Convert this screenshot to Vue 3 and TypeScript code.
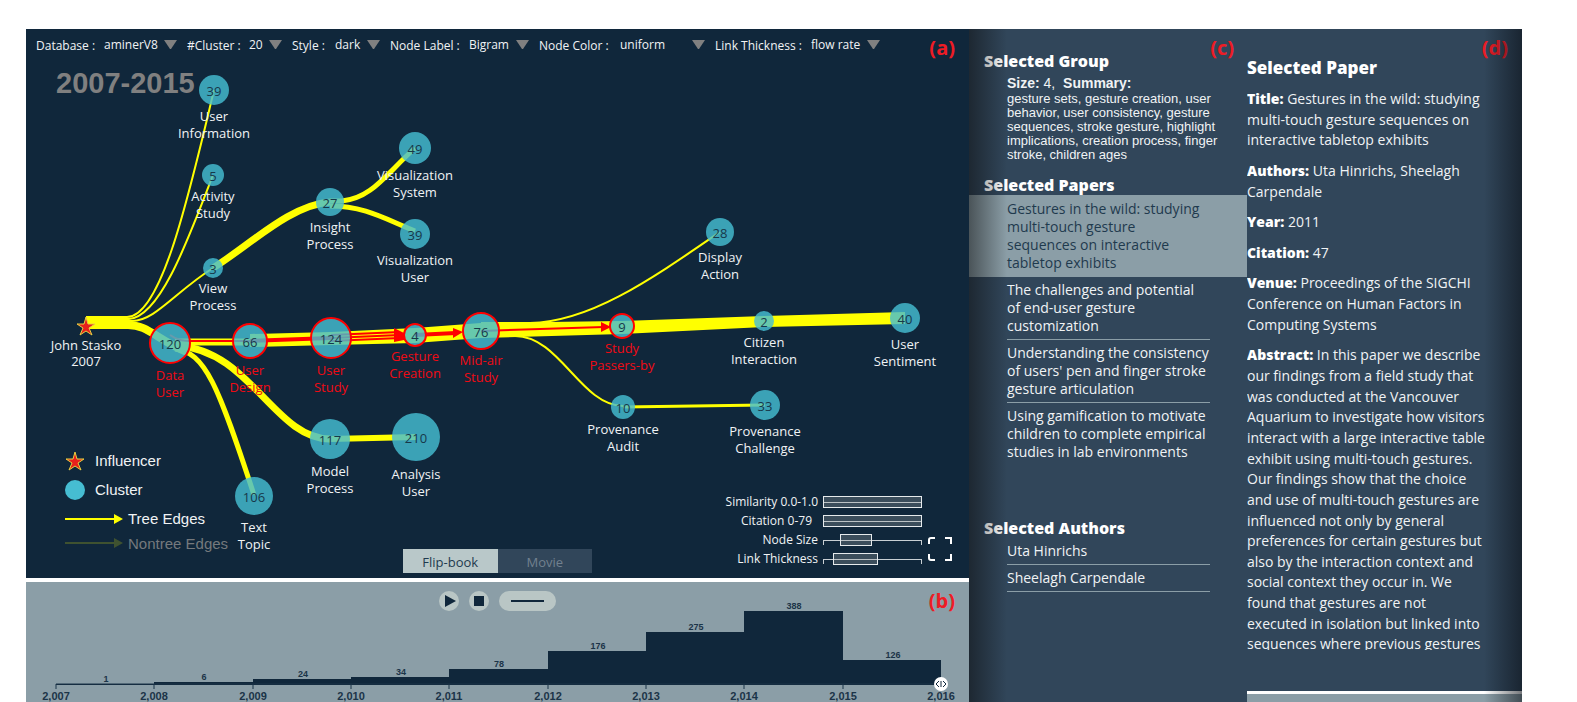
<script setup lang="ts">
import { ref } from 'vue'

interface Filter { id: string; label: string; value: string; span: number; field: number }
interface GraphNode { x: number; y: number; r: number; n: number; label: [string, string]; ty: number; hot?: boolean }
interface Edge { d: string; w: number }
interface Slider { id: string; label: string; thumb: number; value: number; inset?: boolean }

const filters: Filter[] = [
  { id: 'database', label: 'Database :', value: 'aminerV8', span: 151, field: 73 },
  { id: 'cluster', label: '#Cluster :', value: '20', span: 105, field: 33 },
  { id: 'style', label: 'Style :', value: 'dark', span: 98, field: 45 },
  { id: 'node-label', label: 'Node Label :', value: 'Bigram', span: 149, field: 60 },
  { id: 'node-color', label: 'Node Color :', value: 'uniform', span: 176, field: 85 },
  { id: 'link-thickness', label: 'Link Thickness :', value: 'flow rate', span: 175, field: 69 },
]

const nodes: GraphNode[] = [
  { x: 214, y: 90, r: 15, n: 39, label: ['User', 'Information'], ty: 121 },
  { x: 213, y: 175, r: 11, n: 5, label: ['Activity', 'Study'], ty: 201 },
  { x: 330, y: 202, r: 14, n: 27, label: ['Insight', 'Process'], ty: 232 },
  { x: 415, y: 148, r: 16, n: 49, label: ['Visualization', 'System'], ty: 180 },
  { x: 415, y: 234, r: 15, n: 39, label: ['Visualization', 'User'], ty: 265 },
  { x: 213, y: 268, r: 10, n: 3, label: ['View', 'Process'], ty: 293 },
  { x: 720, y: 232, r: 14, n: 28, label: ['Display', 'Action'], ty: 262 },
  { x: 170, y: 343, r: 20, n: 120, label: ['Data', 'User'], ty: 380, hot: true },
  { x: 250, y: 341, r: 17, n: 66, label: ['User', 'Design'], ty: 375, hot: true },
  { x: 331, y: 338, r: 20, n: 124, label: ['User', 'Study'], ty: 375, hot: true },
  { x: 330, y: 439, r: 20, n: 117, label: ['Model', 'Process'], ty: 476 },
  { x: 254, y: 496, r: 19, n: 106, label: ['Text', 'Topic'], ty: 532 },
  { x: 416, y: 437, r: 24, n: 210, label: ['Analysis', 'User'], ty: 479 },
  { x: 415, y: 335, r: 11, n: 4, label: ['Gesture', 'Creation'], ty: 361, hot: true },
  { x: 481, y: 331, r: 18, n: 76, label: ['Mid-air', 'Study'], ty: 365, hot: true },
  { x: 622, y: 326, r: 12, n: 9, label: ['Study', 'Passers-by'], ty: 353, hot: true },
  { x: 623, y: 407, r: 12, n: 10, label: ['Provenance', 'Audit'], ty: 434 },
  { x: 764, y: 321, r: 10, n: 2, label: ['Citizen', 'Interaction'], ty: 347 },
  { x: 905, y: 318, r: 15, n: 40, label: ['User', 'Sentiment'], ty: 349 },
  { x: 765, y: 405, r: 15, n: 33, label: ['Provenance', 'Challenge'], ty: 436 },
]

const edges: Edge[] = [
  { d: 'M86 317 H127 C162 317 190 190 214 90', w: 2 },
  { d: 'M86 319 H129 C160 317 188 240 213 175', w: 2 },
  { d: 'M86 321 H132 C155 321 175 292 213 268', w: 2 },
  { d: 'M86 325 H128 C148 325 156 339 187 352', w: 8 },
  { d: 'M213 268 C250 245 290 205 330 202', w: 7 },
  { d: 'M330 201 H342 C372 198 385 175 415 148', w: 5 },
  { d: 'M330 206 C365 206 385 219 415 231', w: 5 },
  { d: 'M178 346 C250 350 275 439 330 439', w: 7 },
  { d: 'M175 349 C205 352 218 385 254 495', w: 5 },
  { d: 'M330 439 L416 437', w: 6 },
  { d: 'M481 323 H530 C590 322 650 280 720 232', w: 2 },
  { d: 'M481 336 H515 C560 336 580 405 623 406', w: 2 },
  { d: 'M623 407 L765 405', w: 3 },
  { d: 'M175 342 L250 342', w: 7 },
]

const flowBand =
  'M250 334 L331 332 L415 328 L481 323 L622 321 L764 316 L905 312 V324 L764 327 L622 334 L481 338 L415 343 L331 345 L250 347 Z'

const sliders: Slider[] = [
  { id: 'similarity', label: 'Similarity 0.0-1.0', thumb: 99, value: 0 },
  { id: 'citation', label: 'Citation 0-79', thumb: 99, value: 0, inset: true },
  { id: 'node-size', label: 'Node Size', thumb: 32, value: 25 },
  { id: 'link-width', label: 'Link Thickness', thumb: 45, value: 19 },
]

const bars = [
  { n: 1, top: 102 }, { n: 6, top: 100 }, { n: 24, top: 97 }, { n: 34, top: 95 }, { n: 78, top: 87 },
  { n: 176, top: 69 }, { n: 275, top: 50 }, { n: 388, top: 29 }, { n: 126, top: 78 },
]
const years = ['2,007', '2,008', '2,009', '2,010', '2,011', '2,012', '2,013', '2,014', '2,015', '2,016']
const yearX = (i: number): number => Math.round(30 + (i * 885) / 9)

const papers = [
  'Gestures in the wild: studying multi-touch gesture sequences on interactive tabletop exhibits',
  'The challenges and potential of end-user gesture customization',
  "Understanding the consistency of users' pen and finger stroke gesture articulation",
  'Using gamification to motivate children to complete empirical studies in lab environments',
]
const authors = ['Uta Hinrichs', 'Sheelagh Carpendale']
const details = [
  { key: 'Title:', text: papers[0] },
  { key: 'Authors:', text: 'Uta Hinrichs, Sheelagh Carpendale' },
  { key: 'Year:', text: '2011' },
  { key: 'Citation:', text: '47' },
  { key: 'Venue:', text: 'Proceedings of the SIGCHI Conference on Human Factors in Computing Systems' },
  {
    key: 'Abstract:',
    text: 'In this paper we describe our findings from a field study that was conducted at the Vancouver Aquarium to investigate how visitors interact with a large interactive table exhibit using multi-touch gestures. Our findings show that the choice and use of multi-touch gestures are influenced not only by general preferences for certain gestures but also by the interaction context and social context they occur in. We found that gestures are not executed in isolation but linked into sequences where previous gestures',
  },
]

const selected = ref(0)
const mode = ref('Flip-book')
</script>

<template>
  <main class="page">
    <div class="left">
      <section class="graph">
        <svg class="canvas" viewBox="26 29 943 549">
          <text class="period" x="56" y="93">2007-2015</text>
          <g class="edges">
            <path v-for="(e, i) in edges" :key="i" :d="e.d" :stroke-width="e.w" />
          </g>
          <path class="band" :d="flowBand" />
          <g class="hot-edges">
            <path d="M170 335 C178 341 185 341 192 341 L250 341" stroke-width="2" />
            <path d="M250 341 L331 338" stroke-width="4" />
            <path d="M331 335 L400 332 M331 338 L400 335 M331 341 L400 338" stroke-width="2" />
            <path d="M415 335 L456 333" stroke-width="4" />
            <path d="M481 331 L604 327" stroke-width="2" />
            <path class="head" d="M394 328 L404 333 V340 L394 342 Z M453 328 L463 332 L453 338 Z M601 322 L611 327 L601 332 Z" />
          </g>
          <g v-for="(n, i) in nodes" :key="i" :class="['node', { hot: n.hot }]">
            <circle :cx="n.x" :cy="n.y" :r="n.r" />
            <text class="count" :x="n.x" :y="n.y + 6">{{ n.n }}</text>
            <text :x="n.x" :y="n.ty">{{ n.label[0] }}</text>
            <text :x="n.x" :y="n.ty + 17">{{ n.label[1] }}</text>
          </g>
          <g class="node">
            <path class="star" d="M86 317 L88 324 H95 L89 328 L92 335 L86 331 L80 335 L83 328 L77 324 H84 Z" />
            <text x="86" y="350">John Stasko</text>
            <text x="86" y="366">2007</text>
          </g>
        </svg>

        <form class="toolbar" @submit.prevent>
          <div v-for="f in filters" :key="f.id" class="filter" :style="{ width: f.span + 'px' }">
            <label :for="f.id">{{ f.label }}</label>
            <span class="field" :style="{ width: f.field + 'px' }">
              <select :id="f.id"><option>{{ f.value }}</option></select>
              <svg class="caret" width="13" height="9" viewBox="0 0 13 9"><path d="M0 0 H13 L7 9 H6 Z" /></svg>
            </span>
          </div>
        </form>

        <div class="footer">
          <ul class="legend">
            <li>
              <svg width="20" height="20" viewBox="0 0 20 20"><path class="star" d="M10 1 L12 8 H19 L13 12 L16 19 L10 15 L4 19 L7 12 L1 8 H8 Z" /></svg>
              Influencer
            </li>
            <li>
              <svg width="20" height="20" viewBox="0 0 20 20"><circle cx="10" cy="10" r="10" fill="#46bdd2" /></svg>
              Cluster
            </li>
            <li class="edge">
              <svg width="58" height="10" viewBox="0 0 58 10"><path d="M0 4 H49 V0 L58 5 L49 10 V6 H0 Z" fill="#ffff00" /></svg>
              Tree Edges
            </li>
            <li class="edge dim">
              <svg width="58" height="10" viewBox="0 0 58 10"><path d="M0 4 H49 V0 L58 5 L49 10 V6 H0 Z" fill="#3f5230" /></svg>
              Nontree Edges
            </li>
          </ul>
          <div class="tabs">
            <button v-for="m in ['Flip-book', 'Movie']" :key="m" type="button" :class="{ on: mode === m }" @click="mode = m">{{ m }}</button>
          </div>
          <div class="controls">
            <div class="sliders">
              <div v-for="s in sliders" :key="s.id" class="slider">
                <label :for="s.id" :class="{ inset: s.inset }">{{ s.label }}</label>
                <input :id="s.id" type="range" :value="s.value" :style="{ '--thumb': s.thumb + 'px' }" />
              </div>
            </div>
            <button class="fit" type="button" aria-label="Fit to screen">
              <svg width="24" height="24" viewBox="0 0 24 24"><path d="M1 7 V3 Q1 1 3 1 H7 M17 1 H23 V7 M23 17 V23 H17 M7 23 H3 Q1 23 1 21 V17" /></svg>
            </button>
          </div>
        </div>
        <span class="tag">(a)</span>
      </section>

      <section class="timeline">
        <svg class="chart" viewBox="0 0 943 120">
          <g v-for="(b, i) in bars" :key="i">
            <rect class="bar" :x="yearX(i)" :y="b.top" :width="yearX(i + 1) - yearX(i)" :height="103 - b.top" />
            <text class="value" :x="yearX(i) + 50" :y="b.top - 2">{{ b.n }}</text>
          </g>
          <path class="axis" d="M30 102 H915" />
          <g v-for="(y, i) in years" :key="y">
            <path class="axis" :d="`M${yearX(i)} 102 V107`" />
            <text class="year" :x="yearX(i)" y="118">{{ y }}</text>
          </g>
          <circle cx="915" cy="102" r="7" fill="#ffffff" />
          <path class="grip" d="M913 99 L910 102 L913 105 M915 99 V105 M917 99 L920 102 L917 105" />
        </svg>
        <div class="player">
          <button type="button" aria-label="Play"><svg width="20" height="20" viewBox="0 0 20 20"><path d="M6 4 L17 10 L6 16 Z" /></svg></button>
          <button type="button" aria-label="Stop"><svg width="20" height="20" viewBox="0 0 20 20"><path d="M5 5 H15 V15 H5 Z" /></svg></button>
          <button type="button" class="speed" aria-label="Speed"><svg width="57" height="20" viewBox="0 0 57 20"><path d="M12 9 H45 V11 H12 Z" /></svg></button>
        </div>
        <span class="tag">(b)</span>
      </section>
    </div>

    <section class="group">
      <h2>Selected Group</h2>
      <div class="summary">
        <p class="size"><b>Size:</b> 4,&nbsp; <b>Summary:</b></p>
        <p>gesture sets, gesture creation, user behavior, user consistency, gesture sequences, stroke gesture, highlight implications, creation process, finger stroke, children ages</p>
      </div>
      <h2>Selected Papers</h2>
      <ul class="papers">
        <li v-for="(p, i) in papers" :key="i" :class="{ on: selected === i }">
          <button type="button" @click="selected = i">{{ p }}</button>
        </li>
      </ul>
      <h2>Selected Authors</h2>
      <ul class="authors">
        <li v-for="a in authors" :key="a">{{ a }}</li>
      </ul>
      <span class="tag">(c)</span>
    </section>

    <section class="paper">
      <div class="scroller">
        <h2>Selected Paper</h2>
        <p v-for="d in details" :key="d.key"><b>{{ d.key }}</b> {{ d.text }}</p>
      </div>
      <div class="next"></div>
      <span class="tag">(d)</span>
    </section>
  </main>
</template>

<style>
body {
  margin: 0;
  background: #ffffff;
}
</style>

<style scoped>
.page {
  display: grid;
  grid-template-columns: 943fr 278fr 275fr;
  height: 100vh;
  box-sizing: border-box;
  padding: 29px 55px 0 26px;
  overflow: hidden;
  font: 13px 'Open Sans', 'Noto Sans', sans-serif;
  color: #f0f3f5;
}
button {
  font: inherit;
  color: inherit;
  border: 0;
  padding: 0;
  background: none;
}
ul {
  list-style: none;
  margin: 0;
  padding: 0;
}
.tag {
  position: absolute;
  top: 6px;
  right: 14px;
  font-size: 20px;
  line-height: 26px;
  font-weight: 700;
  color: #ee1c25;
}
.left {
  display: flex;
  flex-direction: column;
  gap: 4px;
  min-width: 0;
}
.graph {
  position: relative;
  display: grid;
  grid-template-rows: auto 1fr;
  background: #10273b;
}
.canvas {
  grid-area: 1 / 1 / 3 / 2;
  width: 100%;
  display: block;
}
.period {
  font: 700 29px 'Liberation Sans', Arial, sans-serif;
  fill: #808080;
}
.edges path,
.hot-edges path {
  fill: none;
  stroke: #ffff00;
}
.band {
  fill: #ffff00;
}
.hot-edges path {
  stroke: #ff0000;
}
.hot-edges .head {
  fill: #ff0000;
  stroke: none;
}
.node circle {
  fill: #46bdd2;
  fill-opacity: 0.82;
}
.node text {
  font-size: 13px;
  text-anchor: middle;
  fill: #f0f3f5;
}
.node.hot circle {
  stroke: #ff0000;
  stroke-width: 2;
}
.node.hot text {
  fill: #f00a14;
}
.node .count,
.node.hot .count {
  font-size: 13px;
  fill: #17384a;
}
.star {
  fill: #e8201c;
  stroke: #e8d040;
  stroke-width: 1;
}
.toolbar {
  grid-area: 1 / 1 / 2 / 2;
  display: flex;
  padding: 5px 0 0 10px;
  font-size: 12px;
}
.filter {
  display: flex;
  justify-content: space-between;
  box-sizing: border-box;
  padding-right: 10px;
  white-space: nowrap;
}
.filter label {
  padding-top: 2px;
  line-height: 20px;
}
.field {
  display: grid;
  align-items: start;
}
.field select {
  grid-area: 1 / 1;
  width: 100%;
  height: 20px;
  appearance: none;
  border: 0;
  padding: 0;
  background: none;
  font: inherit;
  color: inherit;
}
.field option {
  color: #10273b;
}
.caret {
  grid-area: 1 / 1;
  justify-self: end;
  margin-top: 6px;
  fill: #808080;
  pointer-events: none;
}
.footer {
  grid-area: 2 / 1 / 3 / 2;
  align-self: end;
  display: grid;
  grid-template-columns: 377fr 189px 377fr;
  align-items: end;
  padding-bottom: 5px;
}
.legend {
  padding: 0 0 20px 39px;
  font: 15px 'Liberation Sans', Arial, sans-serif;
}
.legend li {
  display: flex;
  align-items: center;
  gap: 10px;
  height: 29px;
}
.legend .edge {
  gap: 5px;
}
.legend .dim {
  height: 20px;
  color: #75797d;
}
.tabs {
  display: grid;
  grid-template-columns: 1fr 1fr;
}
.tabs button {
  height: 24px;
  padding-top: 2px;
  background: #31465a;
  color: #71818f;
}
.tabs .on {
  background: #b9c8c9;
  color: #1f3a4e;
}
.controls {
  display: flex;
  justify-content: flex-end;
  align-items: flex-end;
  gap: 6px;
  padding: 0 17px 5px 0;
}
.sliders {
  display: grid;
  row-gap: 1px;
}
.slider {
  display: flex;
  justify-content: flex-end;
  align-items: center;
  gap: 5px;
  height: 18px;
  font-size: 12px;
  line-height: 18px;
}
.slider .inset {
  padding-right: 6px;
}
.slider input {
  appearance: none;
  width: 99px;
  height: 12px;
  margin: 0;
  background:
    linear-gradient(#c9cfd3, #c9cfd3) 0 6px / 100% 1px no-repeat,
    linear-gradient(#c9cfd3, #c9cfd3) 0 6px / 1px 5px no-repeat,
    linear-gradient(#c9cfd3, #c9cfd3) 100% 6px / 1px 5px no-repeat;
}
.slider input::-webkit-slider-thumb {
  appearance: none;
  box-sizing: border-box;
  width: var(--thumb);
  height: 12px;
  border: 1px solid #e6eaec;
  background: rgba(160, 165, 165, 0.3);
}
.fit {
  display: block;
  height: 24px;
  margin-bottom: 7px;
}
.fit path {
  fill: none;
  stroke: #ffffff;
  stroke-width: 2;
}
.timeline {
  position: relative;
  flex: 1;
  display: grid;
  align-items: start;
  background: #8b9ea7;
}
.chart {
  grid-area: 1 / 1;
  width: 100%;
  display: block;
}
.bar {
  fill: #10273b;
}
.value,
.year {
  font: 700 9px 'Liberation Sans', Arial, sans-serif;
  text-anchor: middle;
  fill: #1b3448;
}
.year {
  font-size: 11px;
}
.axis {
  stroke: #1b3448;
  stroke-width: 1;
}
.grip {
  fill: none;
  stroke: #10273b;
}
.player {
  grid-area: 1 / 1;
  display: flex;
  justify-content: center;
  gap: 10px;
  padding-top: 9px;
}
.player button {
  height: 20px;
  border-radius: 10px;
  background: #b9c6c5;
}
.player svg {
  display: block;
  fill: #10273b;
}
h2 {
  margin: 0;
  font-size: 16px;
  line-height: 20px;
  font-weight: 800;
  color: #ffffff;
}
.group,
.paper {
  position: relative;
  min-width: 0;
  background: #31465a;
  font-size: 14px;
}
.group::after,
.paper::after {
  content: '';
  position: absolute;
  inset: 0 auto 0 0;
  width: 38px;
  background: linear-gradient(to right, rgba(10, 10, 10, 0.5), rgba(10, 10, 10, 0));
  pointer-events: none;
}
.paper::after {
  inset: 0 0 0 auto;
  background: linear-gradient(to left, rgba(6, 10, 16, 0.55), rgba(6, 10, 16, 0));
}
.group {
  padding-top: 22px;
}
.group h2 {
  padding-left: 15px;
}
.group .tag {
  right: 13px;
}
.summary {
  padding: 3px 26px 13px 38px;
  font: 13px/14px 'Liberation Sans', Arial, sans-serif;
}
.summary p {
  margin: 0;
}
.summary .size {
  font-size: 14px;
  line-height: 18px;
}
.papers {
  padding-bottom: 53px;
}
.papers li {
  padding-left: 38px;
}
.papers button {
  display: block;
  box-sizing: border-box;
  width: 203px;
  padding: 4px 0;
  border-bottom: 1px solid #8b9ea7;
  text-align: left;
  line-height: 18px;
}
.papers .on {
  background: #8b9ea7;
  color: #1f3a4e;
}
.papers .on button {
  padding: 5px 8px 5px 0;
  border-bottom: 0;
}
.papers li:last-child button {
  border-bottom: 0;
}
.authors {
  padding: 0 37px 0 38px;
}
.authors li {
  height: 26px;
  line-height: 26px;
  border-bottom: 1px solid #8b9ea7;
}
.paper {
  display: flex;
  flex-direction: column;
  min-height: 0;
}
.paper h2 {
  font-size: 17px;
  padding-bottom: 1px;
}
.scroller {
  flex: 1;
  min-height: 0;
  overflow: hidden;
  padding: 29px 34px 0 0;
}
.scroller p {
  margin: 10px 0 0;
  line-height: 1.475;
}
.scroller b {
  font-weight: 800;
  color: #ffffff;
}
.next {
  height: 8px;
  margin-top: 41px;
  border-top: 3px solid #ffffff;
  background: #8b9ea7;
}
</style>
